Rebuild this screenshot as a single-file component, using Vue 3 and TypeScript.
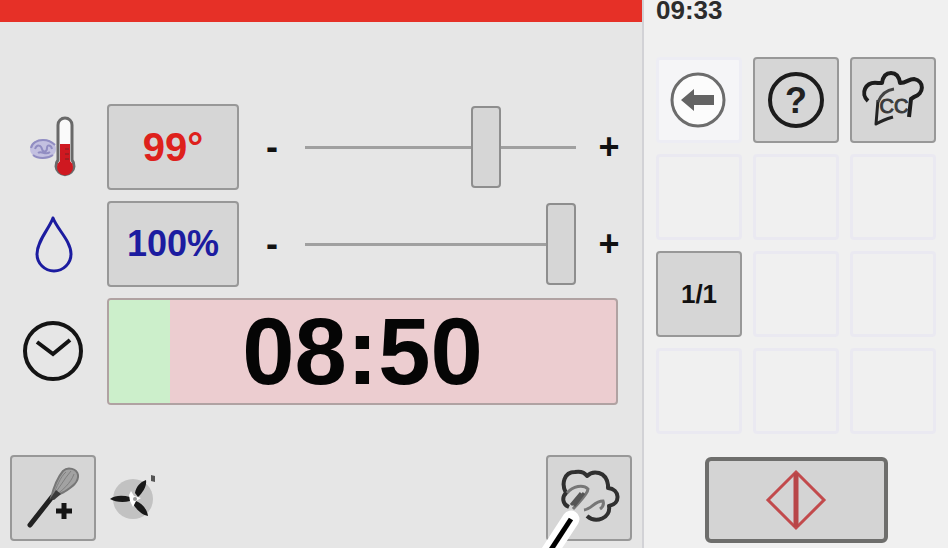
<script setup lang="ts">
import { computed, ref } from 'vue'

const temperature = ref(69)
const humidity = ref(100)
const progress = 12

const progressStyle = computed(() => ({ width: `${progress}%` }))
const emptyTop = [1, 2, 3]
const emptyRest = [1, 2, 3, 4, 5]
</script>

<template>
  <div class="screen">
    <main class="cooking">
      <div class="banner"></div>
      <section class="settings">
        <div class="row">
          <svg class="icon" width="50" height="64" viewBox="0 0 50 64" aria-hidden="true">
            <ellipse cx="14" cy="34" rx="13" ry="10" fill="#c3c0e0" />
            <path d="M2 33c1-5 6-8 12-8s9 2 12 5M4 40c5 4 14 4 20 0M6 34c2-5 6-4 7 0s5 3 5-1 4-3 5 1M9 38c4-3 7 3 12-1" fill="none" stroke="#918dc2" stroke-width="2" />
            <path d="M29 45V10a7 7 0 0 1 14 0v35a9 9 0 1 1-14 0z" fill="#fafafa" stroke="#696969" stroke-width="3" />
            <path d="M31 29h10v17a8 8 0 1 1-10 0z" fill="#cf1820" />
            <path d="M36 34h4M36 39h4M36 44h4" stroke="#7c2022" stroke-width="1" />
          </svg>
          <button class="key value hot" type="button">99°</button>
          <div class="adjust">
            <button class="step" type="button" aria-label="Lower temperature">-</button>
            <input v-model.number="temperature" class="slider" type="range" min="0" max="100" aria-label="Temperature" />
            <button class="step" type="button" aria-label="Raise temperature">+</button>
          </div>
        </div>
        <div class="row">
          <svg class="icon" width="50" height="64" viewBox="0 0 50 64" aria-hidden="true">
            <path d="M24 6C20 17 8 29 8 42a17 17 0 0 0 34 0C42 29 28 17 24 6z" fill="none" stroke="#1c1ca0" stroke-width="3" stroke-linejoin="round" />
          </svg>
          <button class="key value wet" type="button">100%</button>
          <div class="adjust">
            <button class="step" type="button" aria-label="Lower humidity">-</button>
            <input v-model.number="humidity" class="slider" type="range" min="0" max="100" aria-label="Humidity" />
            <button class="step" type="button" aria-label="Raise humidity">+</button>
          </div>
        </div>
        <div class="row timer-row">
          <svg class="icon" width="64" height="64" viewBox="0 0 64 64" aria-hidden="true">
            <circle cx="31" cy="31" r="28" fill="none" stroke="#141414" stroke-width="4" />
            <path d="M15 22l16 12 17-14" fill="none" stroke="#141414" stroke-width="4" />
          </svg>
          <button class="timer" type="button">
            <span class="elapsed" :style="progressStyle"></span>
            <span class="time">08:50</span>
          </button>
        </div>
      </section>
      <footer class="tools">
        <button class="key square" type="button" aria-label="Add accessory">
          <svg width="82" height="82" viewBox="2 2 82 82" aria-hidden="true">
            <path d="M20 70L42 42" stroke="#222" stroke-width="5" stroke-linecap="round" />
            <path d="M41 43C44 31 48 22 53 16c5-5 14-2 15 4 1 7-6 12-14 17z" fill="#a2a2a2" stroke="#777" stroke-width="2" />
            <path d="M42 42C49 34 54 24 61 16M43 42C52 36 61 28 64 19M43 40C47 32 50 22 56 17" fill="none" stroke="#808080" stroke-width="1" />
            <path d="M40 44l6-9 5 4-7 6z" fill="#3c3c3c" />
            <path d="M46 56h16M54 48v16" stroke="#151515" stroke-width="5" />
          </svg>
        </button>
        <svg class="fan" width="50" height="50" viewBox="0 0 50 50" aria-hidden="true">
          <circle cx="25" cy="26" r="20" fill="#c2c2c2" />
          <path d="M2 26c5-4 13-4 20-2v4C15 30 7 29 2 26zM27 20c1-6 5-11 11-13 1 6-3 12-8 17zM28 28c6 2 11 8 12 15-6-1-12-7-15-12z" fill="#191919" />
          <path d="M23 18l3 5 7 2-5 3-3 6-3-6-1-6z" fill="#fff" />
          <circle cx="27" cy="26" r="2" fill="#999" />
          <path d="M43 2l4 1v6l-4-1z" fill="#555" />
        </svg>
        <button class="key square vapour" type="button" aria-label="Steam">
          <svg width="82" height="82" viewBox="2 2 82 82" aria-hidden="true">
            <path d="M23 52C16 49 16 42 20 38C15 29 18 17 29 17C35 16 39 18 41 21C47 15 60 16 62 30V33C74 34 75 49 63 51C65 63 50 69 41 61" fill="none" stroke="#303030" stroke-width="4" stroke-linejoin="round" />
            <path d="M21 38C27 31 37 29 42 34C42 39 33 47 27 54M38 55C46 54 48 46 57 46C58 49 57 52 54 54" fill="none" stroke="#777" stroke-width="3" />
            <path d="M35 38L25 50M38 38L28 51" stroke="#555" stroke-width="3" />
          </svg>
          <svg class="pointer" width="46" height="46" viewBox="0 0 46 46" aria-hidden="true">
            <path d="M37 17L5 66" stroke="#fff" stroke-width="17" stroke-linecap="round" />
            <path d="M37 17L5 66" stroke="#000" stroke-width="5" />
          </svg>
        </button>
      </footer>
    </main>
    <aside class="side">
      <time class="clock">09:33</time>
      <div class="pad">
        <button class="key square faded" type="button" aria-label="Back">
          <svg width="80" height="80" viewBox="3 3 80 80" aria-hidden="true">
            <circle cx="42" cy="43" r="26" fill="#fcfcfc" stroke="#6c6c6c" stroke-width="3" />
            <path d="M25 43l13-11v6h20v10H38v6z" fill="#636363" />
          </svg>
        </button>
        <button class="key square" type="button" aria-label="Help">
          <svg width="82" height="82" viewBox="2 2 82 82" aria-hidden="true">
            <circle cx="43" cy="43" r="26" fill="none" stroke="#1c1c1c" stroke-width="4" />
            <text class="glyph help" x="43" y="56">?</text>
          </svg>
        </button>
        <button class="key square" type="button" aria-label="Cooking control">
          <svg width="82" height="82" viewBox="2 2 82 82" aria-hidden="true">
            <path d="M18 44C10 37 15 24 28 26H32C33 19 36 16 41 16C46 16 49 19 50 26C57 26 58 22 64 22C75 24 74 37 64 40L61 42L59 60" fill="none" stroke="#1d1d1d" stroke-width="4" stroke-linejoin="round" />
            <path d="M28 43L26 67C31 64 36 62 43 60" fill="none" stroke="#242424" stroke-width="3" stroke-linejoin="round" />
            <path d="M28 45C31 38 36 33 44 32" fill="none" stroke="#444" stroke-width="3" />
            <text class="glyph mark" x="44" y="56">CC</text>
          </svg>
        </button>
        <div v-for="n in emptyTop" :key="`top-${n}`" class="slot"></div>
        <button class="key square page" type="button">1/1</button>
        <div v-for="n in emptyRest" :key="`rest-${n}`" class="slot"></div>
      </div>
      <button class="start" type="button" aria-label="Start">
        <svg width="64" height="64" viewBox="0 0 64 64" aria-hidden="true">
          <path d="M32 4l28 28-28 28L4 32z" fill="none" stroke="#c24a4c" stroke-width="3" />
          <path d="M32 5v54" stroke="#b84648" stroke-width="5" />
        </svg>
      </button>
    </aside>
  </div>
</template>

<style>
body {
  margin: 0;
}
</style>

<style scoped>
.screen {
  display: grid;
  grid-template-columns: minmax(0, 1fr) 304px;
  min-height: 100vh;
  font-family: "Liberation Sans", Arial, sans-serif;
  font-weight: bold;
  color: #111;
  background: #f0f0f0;
}

.screen * {
  box-sizing: border-box;
}

button {
  margin: 0;
  padding: 0;
  font: inherit;
  color: inherit;
}

svg {
  display: block;
}

.cooking {
  display: flex;
  flex-direction: column;
  border-right: 2px solid #d2d2d6;
  background: #e6e6e6;
}

.banner {
  height: 22px;
  background: #e63027;
}

.settings {
  display: flex;
  flex-direction: column;
  gap: 11px;
  padding-top: 82px;
}

.row {
  display: grid;
  grid-template-columns: 107px 132px minmax(0, 1fr);
  align-items: center;
}

.timer-row {
  grid-template-columns: 107px minmax(0, 1fr);
  padding-right: 24px;
}

.icon {
  justify-self: center;
}

.key {
  height: 86px;
  border: 2px solid #989898;
  border-radius: 4px;
  background: #d6d6d6;
}

.square {
  width: 86px;
}

.value {
  font-size: 36px;
}

.hot {
  font-size: 40px;
  color: #de211c;
}

.wet {
  color: #1c1ca0;
}

.adjust {
  display: grid;
  grid-template-columns: 66px minmax(0, 1fr) 66px;
  align-items: center;
}

.step {
  border: 0;
  background: none;
  font-size: 36px;
  line-height: 40px;
}

.slider {
  width: 100%;
  height: 82px;
  margin: 0;
  appearance: none;
  background: linear-gradient(#a0a0a0, #a0a0a0) center / 100% 3px no-repeat;
}

.slider::-webkit-slider-thumb {
  appearance: none;
  box-sizing: border-box;
  width: 30px;
  height: 82px;
  border: 2px solid #8e8e8e;
  border-radius: 4px;
  background: #d6d6d6;
}

.timer {
  position: relative;
  height: 107px;
  overflow: hidden;
  border: 2px solid #b0a2a2;
  border-radius: 4px;
  background: #eccdd0;
}

.elapsed {
  position: absolute;
  inset: 0 auto 0 0;
  background: #ccefcb;
}

.time {
  position: relative;
  font-size: 94px;
  line-height: 103px;
  color: #050505;
}

.tools {
  display: flex;
  align-items: center;
  gap: 12px;
  margin-top: auto;
  padding: 0 10px 7px 10px;
}

.vapour {
  position: relative;
  margin-left: auto;
}

.pointer {
  position: absolute;
  left: -14px;
  bottom: -9px;
}

.side {
  display: flex;
  flex-direction: column;
  padding: 0 12px;
}

.clock {
  height: 57px;
  font-size: 26px;
  line-height: 20px;
  color: #2c2c2c;
}

.pad {
  display: grid;
  grid-template-columns: repeat(3, 86px);
  grid-auto-rows: 86px;
  gap: 11px;
}

.slot {
  border: 3px solid #eae9f1;
  border-radius: 4px;
}

.faded {
  border: 3px solid #ededf4;
  background: #f5f5f7;
}

.page {
  font-size: 26px;
}

.glyph {
  text-anchor: middle;
  fill: #222;
}

.help {
  font-size: 36px;
}

.mark {
  font-size: 20px;
  font-weight: normal;
  fill: #3a3a3a;
  stroke: #3a3a3a;
}

.start {
  display: grid;
  place-items: center;
  align-self: center;
  width: 183px;
  height: 86px;
  margin-top: auto;
  margin-bottom: 5px;
  border: 4px solid #6e6e6c;
  border-radius: 6px;
  background: #d4d4d4;
}
</style>
